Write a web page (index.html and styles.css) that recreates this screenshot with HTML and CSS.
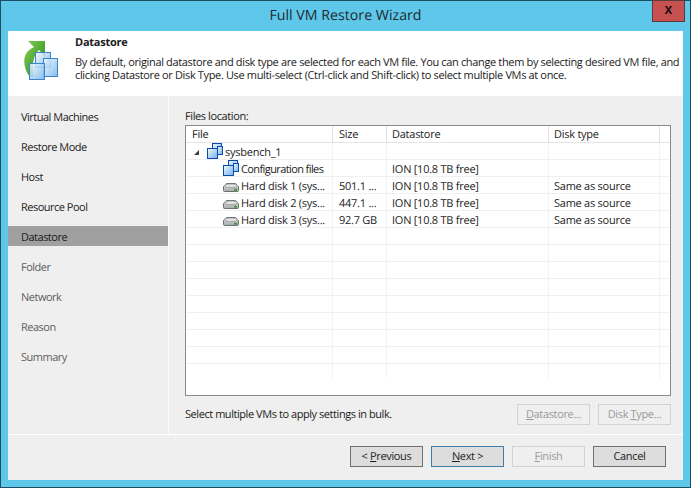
FILE: index.html
```html
<!DOCTYPE html>
<html lang="en">
<head>
<meta charset="utf-8">
<title>Full VM Restore Wizard</title>
<link rel="stylesheet" href="styles.css">
</head>
<body>
<svg class="defs" width="0" height="0" aria-hidden="true">
  <defs>
    <linearGradient id="blue" x1="0" y1="0" x2="1" y2="1">
      <stop offset="0" stop-color="#f2f9ff"/><stop offset="1" stop-color="#6fb2ea"/>
    </linearGradient>
    <linearGradient id="disk" x1="0" y1="0" x2="0" y2="1">
      <stop offset="0" stop-color="#e8e8e8"/><stop offset="1" stop-color="#a4a8a8"/>
    </linearGradient>
    <linearGradient id="green" x1="0" y1="0" x2="1" y2="1">
      <stop offset="0" stop-color="#8fd14f"/><stop offset="1" stop-color="#16851f"/>
    </linearGradient>
    <symbol id="vm" viewBox="0 0 16 16">
      <rect x="5.500" y="0.500" width="9" height="9" fill="url(#blue)" stroke="#0b4aa8"/>
      <rect x="10.500" y="3.500" width="5" height="8" fill="url(#blue)" stroke="#0b4aa8"/>
      <rect x="0.500" y="5.500" width="10" height="10" fill="url(#blue)" stroke="#0b4aa8"/>
    </symbol>
    <symbol id="hdd" viewBox="0 0 16 9">
      <path d="M3.500 .5H12.500L15.500 3.500V7.500Q15.500 8.500 14.500 8.500H1.500Q.5 8.500 .5 7.500V3.500Z" fill="url(#disk)" stroke="#6b6f6f"/>
      <ellipse cx="8" cy="2.800" rx="6.500" ry="1.800" fill="#e2e4e4" stroke="#8b8f8f" stroke-width=".7"/>
      <rect x="11" y="5.700" width="3" height="2" fill="#3d9a3d"/>
    </symbol>
  </defs>
</svg>
<div class="window">
  <header class="titlebar">
    <h1 class="title">Full VM Restore Wizard</h1>
    <button class="close" type="button">x</button>
  </header>
  <div class="client">
    <section class="banner">
      <svg class="banner-icon" viewBox="0 0 36 40" width="36" height="40" aria-hidden="true">
        <path d="M6 36C1 30 -1 22 1 15C3 10 6 8 10 6L4 0H21V16L15 9C10 13 8 22 9 36Z" fill="url(#green)"/>
        <g fill="url(#blue)" fill-opacity=".85" stroke="#3b86c8" stroke-width="1">
          <rect x="11.500" y="11.500" width="15" height="15"/>
          <rect x="19.500" y="17.500" width="14" height="18"/>
          <rect x="5.500" y="22.500" width="15" height="16"/>
        </g>
      </svg>
      <div class="banner-text">
        <h2 class="banner-title">Datastore</h2>
        <p class="banner-desc">By default, original datastore and disk type are selected for each VM file. You can change them by selecting desired VM file, and<br>clicking Datastore or Disk Type. Use multi-select (Ctrl-click and Shift-click) to select multiple VMs at once.</p>
      </div>
    </section>
    <div class="middle">
      <nav class="steps">
        <div class="step">Virtual Machines</div>
        <div class="step">Restore Mode</div>
        <div class="step">Host</div>
        <div class="step">Resource Pool</div>
        <div class="step active">Datastore</div>
        <div class="step off">Folder</div>
        <div class="step off">Network</div>
        <div class="step off">Reason</div>
        <div class="step off">Summary</div>
      </nav>
      <main class="pane">
        <div class="files-label">Files location:</div>
        <div class="list">
          <div class="row head">
            <div class="cell">File</div><div class="cell">Size</div><div class="cell">Datastore</div><div class="cell">Disk type</div><div class="cell filler"></div>
          </div>
          <div class="row">
            <div class="cell tree lvl0"><span class="arrow"></span><svg class="ico-vm"><use href="#vm"/></svg><span>sysbench_1</span></div><div class="cell"></div><div class="cell"></div><div class="cell"></div><div class="cell filler"></div>
          </div>
          <div class="row">
            <div class="cell tree lvl1"><svg class="ico-vm"><use href="#vm"/></svg><span class="cfg">Configuration files</span></div><div class="cell"></div><div class="cell">ION [10.8 TB free]</div><div class="cell"></div><div class="cell filler"></div>
          </div>
          <div class="row">
            <div class="cell tree lvl1"><svg class="ico-hdd"><use href="#hdd"/></svg><span>Hard disk 1 (sys...</span></div><div class="cell">501.1 ...</div><div class="cell">ION [10.8 TB free]</div><div class="cell">Same as source</div><div class="cell filler"></div>
          </div>
          <div class="row">
            <div class="cell tree lvl1"><svg class="ico-hdd"><use href="#hdd"/></svg><span>Hard disk 2 (sys...</span></div><div class="cell">447.1 ...</div><div class="cell">ION [10.8 TB free]</div><div class="cell">Same as source</div><div class="cell filler"></div>
          </div>
          <div class="row">
            <div class="cell tree lvl1"><svg class="ico-hdd"><use href="#hdd"/></svg><span>Hard disk 3 (sys...</span></div><div class="cell">92.7 GB</div><div class="cell">ION [10.8 TB free]</div><div class="cell">Same as source</div><div class="cell filler"></div>
          </div>
          <div class="row"><div class="cell"></div><div class="cell"></div><div class="cell"></div><div class="cell"></div><div class="cell filler"></div></div>
          <div class="row"><div class="cell"></div><div class="cell"></div><div class="cell"></div><div class="cell"></div><div class="cell filler"></div></div>
          <div class="row"><div class="cell"></div><div class="cell"></div><div class="cell"></div><div class="cell"></div><div class="cell filler"></div></div>
          <div class="row"><div class="cell"></div><div class="cell"></div><div class="cell"></div><div class="cell"></div><div class="cell filler"></div></div>
          <div class="row"><div class="cell"></div><div class="cell"></div><div class="cell"></div><div class="cell"></div><div class="cell filler"></div></div>
          <div class="row"><div class="cell"></div><div class="cell"></div><div class="cell"></div><div class="cell"></div><div class="cell filler"></div></div>
          <div class="row"><div class="cell"></div><div class="cell"></div><div class="cell"></div><div class="cell"></div><div class="cell filler"></div></div>
          <div class="row"><div class="cell"></div><div class="cell"></div><div class="cell"></div><div class="cell"></div><div class="cell filler"></div></div>
          <div class="row last"><div class="cell"></div><div class="cell"></div><div class="cell"></div><div class="cell"></div><div class="cell filler"></div></div>
        </div>
        <div class="bulk">
          <span class="bulk-text">Select multiple VMs to apply settings in bulk.</span>
          <div class="bulk-buttons">
            <button class="btn bulk-btn" type="button" disabled><u>D</u>atastore...</button>
            <button class="btn bulk-btn" type="button" disabled>Disk <u>T</u>ype...</button>
          </div>
        </div>
      </main>
    </div>
    <footer class="footer">
      <button class="btn nav-btn" type="button">&lt; <u>P</u>revious</button>
      <button class="btn nav-btn default" type="button"><u>N</u>ext &gt;</button>
      <button class="btn nav-btn" type="button" disabled><u>F</u>inish</button>
      <button class="btn nav-btn" type="button">Cancel</button>
    </footer>
  </div>
</div>
</body>
</html>
```

FILE: styles.css
```css
* { box-sizing: border-box; }
html, body { margin: 0; padding: 0; }
body {
  width: 691px;
  height: 488px;
  overflow: hidden;
  font-family: "Open Sans", "Liberation Sans", sans-serif;
  font-size: 11px;
  letter-spacing: -0.25px;
  text-rendering: geometricPrecision;
  color: #1c1c1c;
}
.defs { position: absolute; }
.window {
  position: relative;
  width: 691px;
  height: 488px;
  background: #5fc8ea;
  border: 1px solid #1d4d63;
  display: flex;
  flex-direction: column;
  padding: 0 7px 7px 7px;
}
.titlebar {
  height: 30px;
  flex: none;
  display: flex;
  align-items: center;
  justify-content: center;
}
.title {
  margin: 0 0 2px;
  font-size: 14.2px;
  font-weight: 400;
  letter-spacing: 0;
  color: #1e2a30;
}
.close {
  position: absolute;
  top: -1px;
  left: 651px;
  width: 33px;
  height: 22px;
  padding: 0 0 4px;
  background: #c75050;
  border: 1px solid #5d3a3a;
  font: 700 14px "Liberation Sans", Arial, sans-serif;
  color: #1a1010;
}
.client {
  flex: 1;
  display: flex;
  flex-direction: column;
  background: #efefef;
  min-height: 0;
}
.banner {
  flex: none;
  height: 65px;
  background: #fff;
  display: flex;
  padding: 10px 0 0 16px;
}
.banner-icon { flex: none; margin-right: 15px; }
.banner-title {
  margin: -5px 0 6px;
  font-size: 11px;
  line-height: 14px;
  font-weight: 700;
}
.banner-desc {
  margin: 0;
  line-height: 13px;
  white-space: nowrap;
  letter-spacing: -0.35px;
}
.middle {
  flex: 1;
  display: flex;
  min-height: 0;
  border-bottom: 1px solid #fff;
}
.steps {
  flex: none;
  width: 161px;
  border-right: 1px solid #fbfbfb;
  padding-top: 10px;
}
.step {
  height: 20px;
  margin-bottom: 10px;
  width: 160px;
  padding: 2px 0 0 13px;
  line-height: 19px;
  letter-spacing: -0.5px;
}
.step.active { background: #a0a0a0; }
.step.off { color: #5e5e5e; }
.pane {
  flex: 1;
  padding: 13px 13px 0 16px;
  display: flex;
  flex-direction: column;
}
.files-label { padding-top: 1px; line-height: 14px; height: 16px; letter-spacing: -0.4px; }
.list {
  width: 486px;
  height: 271px;
  flex: none;
  background: #fff;
  border: 1px solid #8a8a8a;
  overflow: hidden;
}
.row {
  display: grid;
  grid-template-columns: 147px 54px 162px 111px 1fr;
  height: 17px;
}
.row.last { height: 14px; }
.cell {
  border-right: 1px solid #f2f2f2;
  border-bottom: 1px solid #f0f0f0;
  padding: 2px 0 0 6px;
  line-height: 15px;
  white-space: nowrap;
  overflow: hidden;
  display: flex;
  align-items: center;
}
.cell:nth-child(n+3) { padding-left: 5px; }
.head .cell { padding-top: 1px; border-right-color: #e0e0e0; border-bottom-color: #e4e4e4; }
.cell.filler { border-right: 0; padding: 0; }
.last .cell { border-bottom: 0; }
.tree.lvl0 { padding-left: 8px; }
.tree.lvl1 { padding-left: 37px; }
.cfg { letter-spacing: -0.6px; }
.arrow {
  width: 0;
  height: 0;
  border-left: 5px solid transparent;
  border-bottom: 5px solid #404040;
  margin-right: 8px;
  flex: none;
}
.ico-vm { width: 16px; height: 16px; flex: none; margin: -2px 2px 0 0; }
.ico-hdd { width: 16px; height: 9px; flex: none; margin: 3px 2px 0 0; }
.bulk {
  flex: none;
  display: flex;
  align-items: center;
  justify-content: space-between;
  margin-top: 8px;
}
.bulk-text { letter-spacing: -0.44px; }
.bulk-buttons { display: flex; gap: 8px; }
.btn {
  font: 11px "Open Sans", "Liberation Sans", sans-serif;
  letter-spacing: -0.35px;
  text-rendering: geometricPrecision;
  padding: 0;
  background: #dddddd;
  border: 1px solid #707070;
  color: #1c1c1c;
}
.btn:disabled {
  background: #efefef;
  border-color: #d2d2d2;
  color: #9a9a9a;
}
.bulk-btn { width: 73px; height: 21px; }
.footer {
  flex: none;
  height: 45px;
  display: flex;
  justify-content: flex-end;
  gap: 8px;
  padding: 11px 17px 0 0;
}
.nav-btn { width: 73px; height: 21px; }
.nav-btn.default { border-color: #3d7fa8; }
```
